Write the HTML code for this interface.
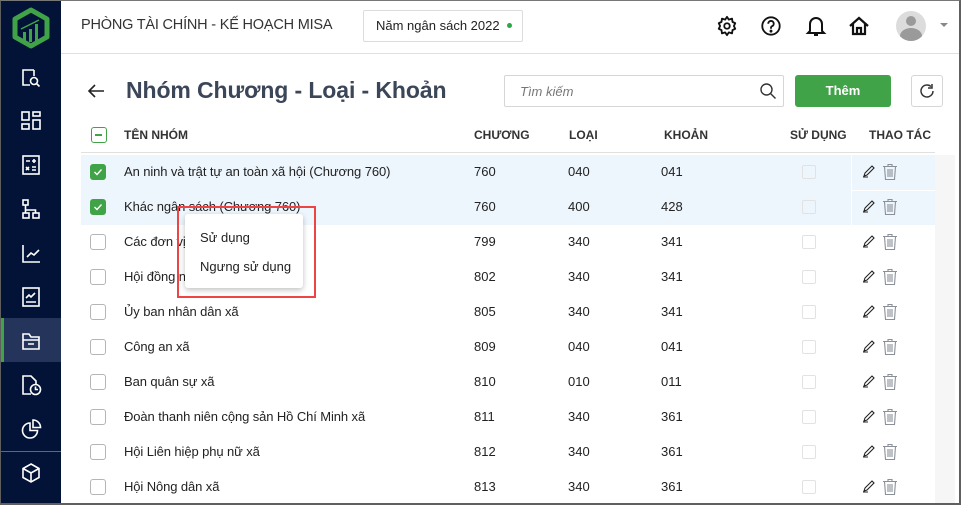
<!DOCTYPE html>
<html><head><meta charset="utf-8">
<style>
*{box-sizing:border-box;margin:0;padding:0}
body{width:961px;height:505px;overflow:hidden;font-family:"Liberation Sans",Arial,sans-serif;background:#fff;position:relative;color:#222}
.frame{position:absolute;inset:0;border:1px solid #5f5f5f;border-top-color:#777;pointer-events:none;z-index:50;border-right-width:2px;border-bottom-width:2px}
.side{position:absolute;left:0;top:0;width:61px;height:505px;background:#031337}
.side .act{position:absolute;left:0;top:318px;width:61px;height:44px;background:#24345a;border-left:4px solid #41a347}
.side .sep{position:absolute;left:0;width:61px;height:1px;background:#5b6885}
.ic{position:absolute;left:20px;width:22px;height:22px}
.hdr{position:absolute;left:61px;top:0;right:0;height:54px;border-bottom:1px solid #e0e0e0}
.abs{position:absolute}
.t{position:absolute;font-size:13px;color:#222;white-space:nowrap}
.cb{position:absolute;width:16px;height:16px;border:1px solid #b5b5b5;border-radius:3px;background:#fff}
.cb.on{background:#41a347;border-color:#41a347}
.sel{position:absolute;left:81px;width:854px;height:70px;top:155px;background:#eef6fd}
.th{position:absolute;top:128px;font-size:12px;color:#333;font-weight:bold;letter-spacing:0}
</style></head><body>
<div class="side">
<svg class="abs" style="left:11px;top:7px" width="40" height="42" viewBox="0 0 40 42"><path d="M20 3 L36 12 V30 L20 39 L4 30 V12 Z" fill="none" stroke="#41a347" stroke-width="5" stroke-linejoin="round"/><rect x="12" y="25" width="3" height="10" fill="#41a347"/><rect x="18" y="22" width="3" height="13" fill="#41a347"/><rect x="24" y="17" width="3" height="18" fill="#41a347"/><path d="M10 22 L20 17 L28 13" stroke="#41a347" stroke-width="1.5" fill="none"/></svg>
<svg class="ic" style="top:66px" viewBox="0 0 22 22" fill="none" stroke="#fff" stroke-width="1.6"><path d="M14 4H3v15h7"/><path d="M14 4v6"/><circle cx="14" cy="15" r="3.5"/><path d="M16.5 17.5l3 3"/></svg>
<svg class="ic" style="top:110px" viewBox="0 0 22 22" fill="none" stroke="#fff" stroke-width="1.6"><rect x="2" y="2" width="7" height="8"/><rect x="13" y="2" width="7" height="4"/><rect x="2" y="14" width="7" height="5"/><rect x="13" y="10" width="7" height="9"/></svg>
<svg class="ic" style="top:154px" viewBox="0 0 22 22" fill="none" stroke="#fff" stroke-width="1.6"><rect x="3" y="2" width="16" height="18"/><path d="M6 7h4M14 5v4M12 7h4M6 13l3 3M9 13l-3 3M12 13h4M12 16h4"/></svg>
<svg class="ic" style="top:198px" viewBox="0 0 22 22" fill="none" stroke="#fff" stroke-width="1.6"><rect x="3" y="2" width="5" height="5"/><rect x="3" y="15" width="6" height="5"/><rect x="13" y="15" width="6" height="5"/><path d="M5.5 7v5h10v3M5.5 12v3"/></svg>
<svg class="ic" style="top:242px" viewBox="0 0 22 22" fill="none" stroke="#fff" stroke-width="1.6"><path d="M3 3v17h17"/><path d="M7 15l4-4 3 2 5-5"/></svg>
<svg class="ic" style="top:286px" viewBox="0 0 22 22" fill="none" stroke="#fff" stroke-width="1.6"><rect x="3" y="2" width="16" height="18"/><path d="M6 12l3-3 2 2 4-4M6 16h10"/></svg>
<div class="sep" style="top:318px"></div>
<div class="act"></div>
<svg class="ic" style="top:330px" viewBox="0 0 22 22" fill="none" stroke="#fff" stroke-width="1.6"><path d="M3 4h6l2 3h8v12H3z"/><path d="M3 10h16M8 14h6"/></svg>
<svg class="ic" style="top:374px" viewBox="0 0 22 22" fill="none" stroke="#fff" stroke-width="1.6"><path d="M11 20H3V2h8l5 5v3"/><circle cx="15.5" cy="15.5" r="5"/><path d="M15.5 12.5v3h2.5"/></svg>
<svg class="ic" style="top:418px" viewBox="0 0 22 22" fill="none" stroke="#fff" stroke-width="1.6"><path d="M10 5a7.5 7.5 0 1 0 7.5 7.5H10z"/><path d="M13 2v7.5h7.5A7.5 7.5 0 0 0 13 2z"/></svg>
<div class="sep" style="top:451px"></div>
<svg class="ic" style="top:462px" viewBox="0 0 22 22" fill="none" stroke="#fff" stroke-width="1.6"><path d="M11 2l8 4.5v9L11 20l-8-4.5v-9z"/><path d="M3 6.5l8 4.5 8-4.5M11 11v9"/></svg>
</div>

<div class="hdr"></div>
<div class="t" style="left:81px;top:17px;font-size:14.5px;color:#333;letter-spacing:-0.2px">PHÒNG TÀI CHÍNH - KẾ HOẠCH MISA</div>
<div class="abs" style="left:363px;top:10px;width:160px;height:32px;border:1px solid #dcdcdc;border-radius:2px"></div>
<div class="t" style="left:376px;top:18px;font-size:13px;color:#222">Năm ngân sách 2022</div>
<div class="abs" style="left:507px;top:23px;width:5px;height:5px;border-radius:50%;background:#2aa84a"></div>
<svg class="abs" style="left:716px;top:15px" width="22" height="22" viewBox="0 0 24 24" fill="none" stroke="#111" stroke-width="2"><circle cx="12" cy="12" r="3"/><path d="M12 2l2 3 3.5-1 .5 3.5 3 1.5-1.5 3 1.5 3-3 1.5-.5 3.5-3.5-1-2 3-2-3-3.5 1-.5-3.5-3-1.5 1.5-3-1.5-3 3-1.5.5-3.5 3.5 1z" stroke-linejoin="round"/></svg>
<svg class="abs" style="left:760px;top:15px" width="22" height="22" viewBox="0 0 24 24" fill="none" stroke="#111" stroke-width="2"><circle cx="12" cy="12" r="9.5"/><path d="M9 9.5a3 3 0 1 1 4 2.8c-.8.4-1 1-1 1.7V15"/><circle cx="12" cy="17.6" r=".6" fill="#111"/></svg>
<svg class="abs" style="left:805px;top:14px" width="22" height="24" viewBox="0 0 22 24" fill="none" stroke="#111" stroke-width="2"><path d="M5 17V10a6 6 0 0 1 12 0v7l2 2H3z"/><path d="M9 21h4"/></svg>
<svg class="abs" style="left:848px;top:15px" width="22" height="22" viewBox="0 0 22 22" fill="none" stroke="#111" stroke-width="2.2"><path d="M2 11L11 3l9 8M5 9v10h12V9"/><path d="M9 19v-6h4v6"/></svg>
<div class="abs" style="left:896px;top:11px;width:30px;height:30px;border-radius:50%;background:#dcdcdc;overflow:hidden"><div class="abs" style="left:10px;top:5px;width:10px;height:10px;border-radius:50%;background:#9a9a9a"></div><div class="abs" style="left:4px;top:17px;width:22px;height:16px;border-radius:50%;background:#9a9a9a"></div></div>
<div class="abs" style="left:940px;top:23px;border:4px solid transparent;border-top:4px solid #888"></div>

<svg class="abs" style="left:87px;top:83px" width="18" height="16" viewBox="0 0 18 16" fill="none" stroke="#222" stroke-width="1.6"><path d="M17 8H2M8 2L2 8l6 6"/></svg>
<div class="t" style="left:126px;top:77px;font-size:23px;font-weight:bold;color:#3b4659;letter-spacing:-0.1px">Nhóm Chương - Loại - Khoản</div>
<div class="abs" style="left:504px;top:75px;width:280px;height:32px;border:1px solid #d6d6d6;border-radius:2px"></div>
<div class="t" style="left:520px;top:84px;font-size:13px;font-style:italic;color:#777">Tìm kiếm</div>
<svg class="abs" style="left:759px;top:82px" width="18" height="18" viewBox="0 0 18 18" fill="none" stroke="#333" stroke-width="1.4"><circle cx="7.5" cy="7.5" r="5.5"/><path d="M11.5 11.5l5 5"/></svg>
<div class="abs" style="left:795px;top:75px;width:96px;height:32px;background:#41a347;border-radius:3px;color:#fff;font-size:13px;font-weight:bold;text-align:center;line-height:32px">Thêm</div>
<div class="abs" style="left:911px;top:75px;width:32px;height:32px;border:1px solid #d6d6d6;border-radius:3px"></div>
<svg class="abs" style="left:918px;top:82px" width="18" height="18" viewBox="0 0 18 18" fill="none" stroke="#333" stroke-width="1.5"><path d="M15 9a6 6 0 1 1-2-4.5"/><path d="M14 2v4h-4"/></svg>

<div class="abs" style="left:91px;top:127px;width:16px;height:16px;border:1.5px solid #41a347;border-radius:3px"><div class="abs" style="left:3px;top:6px;width:7px;height:1.5px;background:#41a347"></div></div>
<div class="th" style="left:124px">TÊN NHÓM</div>
<div class="th" style="left:474px">CHƯƠNG</div>
<div class="th" style="left:569px">LOẠI</div>
<div class="th" style="left:664px">KHOẢN</div>
<div class="th" style="left:790px">SỬ DỤNG</div>
<div class="th" style="left:869px">THAO TÁC</div>
<div class="abs" style="left:81px;top:152px;width:854px;height:1px;background:#e0e0e0"></div>
<div class="abs" style="left:935px;top:155px;width:20px;height:348px;background:#f6f6f6"></div>
<div class="sel"></div>
<div class="abs" style="left:851px;top:155px;width:1px;height:70px;background:#fff"></div>
<div class="abs" style="left:851px;top:190px;width:84px;height:1px;background:#fff"></div>

<div id="rows"></div>
<script>
const R=[["An ninh và trật tự an toàn xã hội (Chương 760)","760","040","041",1],["Khác ngân sách (Chương 760)","760","400","428",1],["Các đơn vị","799","340","341"],["Hội đồng n","802","340","341"],["Ủy ban nhân dân xã","805","340","341"],["Công an xã","809","040","041"],["Ban quân sự xã","810","010","011"],["Đoàn thanh niên cộng sản Hồ Chí Minh xã","811","340","361"],["Hội Liên hiệp phụ nữ xã","812","340","361"],["Hội Nông dân xã","813","340","361"]];
let h="";R.forEach((r,i)=>{const c=172+35*i;
h+=`<div class="cb${r[4]?' on':''}" style="left:90px;top:${c-8}px">${r[4]?'<svg width="14" height="14" viewBox="0 0 14 14" style="position:absolute;left:0;top:0"><path d="M3.5 7l2.5 2.5 4.5-5" fill="none" stroke="#fff" stroke-width="1.4"/></svg>':''}</div>
<div class="t" style="left:124px;top:${c-8}px;letter-spacing:-0.1px">${r[0]}</div><div class="t" style="left:474px;top:${c-8}px">${r[1]}</div><div class="t" style="left:568px;top:${c-8}px">${r[2]}</div><div class="t" style="left:661px;top:${c-8}px">${r[3]}</div>
<div class="cb" style="left:802px;top:${c-7}px;width:14px;height:14px;border-color:#e2e2e2;border-radius:2px;background:transparent"></div>
<svg class="abs" style="left:862px;top:${c-8}px" width="14" height="14" viewBox="0 0 14 14" fill="none" stroke="#222" stroke-width="1.1"><path d="M2 12l1-3 7-7 2 2-7 7z M1 13h5"/></svg>
<svg class="abs" style="left:882px;top:${c-9}px" width="16" height="18" viewBox="0 0 16 18" fill="none" stroke="#8a8f98" stroke-width="1.1"><path d="M1 3.5h14M6 3.5V1.5h4v2M2.5 3.5l1 13h9l1-13M6 6v8M8 6v8M10 6v8"/></svg>`;});
document.getElementById('rows').innerHTML=h;
</script>

<div class="abs" style="left:185px;top:214px;width:118px;height:74px;background:#fff;border-radius:3px;box-shadow:0 2px 6px rgba(0,0,0,.25)"></div>
<div class="t" style="left:200px;top:230px;font-size:13px">Sử dụng</div>
<div class="t" style="left:200px;top:259px;font-size:13px">Ngưng sử dụng</div>
<div class="abs" style="left:177px;top:206px;width:139px;height:92px;border:2px solid #ef4444"></div>
<div class="frame"></div>
</body></html>
